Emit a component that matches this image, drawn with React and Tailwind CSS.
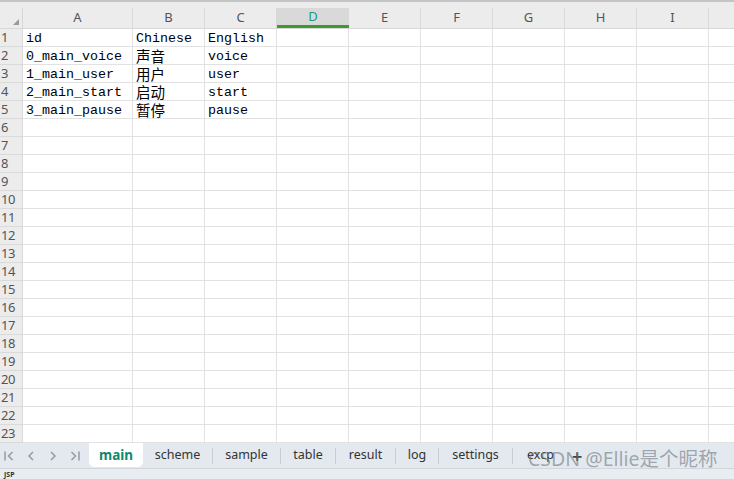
import React from 'react';

const cols = [
  { key: 'A', w: 'w-[110px]' },
  { key: 'B', w: 'w-[72px]' },
  { key: 'C', w: 'w-[72px]' },
  { key: 'D', w: 'w-[72px]' },
  { key: 'E', w: 'w-[72px]' },
  { key: 'F', w: 'w-[72px]' },
  { key: 'G', w: 'w-[72px]' },
  { key: 'H', w: 'w-[72px]' },
  { key: 'I', w: 'w-[72px]' },
];

const data = [
  ['id', 'Chinese', 'English'],
  ['0_main_voice', '声音', 'voice'],
  ['1_main_user', '用户', 'user'],
  ['2_main_start', '启动', 'start'],
  ['3_main_pause', '暂停', 'pause'],
];

const tabs = [
  { name: 'scheme', w: 'w-[70px]' },
  { name: 'sample', w: 'w-[68px]' },
  { name: 'table', w: 'w-[55px]' },
  { name: 'result', w: 'w-[60px]' },
  { name: 'log', w: 'w-[43px]' },
  { name: 'settings', w: 'w-[74px]' },
];

const isCjk = (s) => /[\u4e00-\u9fff]/.test(s);

const Chevron = ({ dir = 'left', bar = false }) => (
  <svg width="12" height="12" viewBox="0 0 12 12" fill="none" stroke="#8c97a3" strokeWidth="1.4">
    {dir === 'left' ? (
      <>
        {bar && <path d="M2 1.5v9" />}
        <path d={bar ? 'M9.5 2L5.5 6l4 4' : 'M8 2L4 6l4 4'} />
      </>
    ) : (
      <>
        <path d={bar ? 'M2.5 2l4 4-4 4' : 'M4 2l4 4-4 4'} />
        {bar && <path d="M10 1.5v9" />}
      </>
    )}
  </svg>
);

const App = () => {
  const rows = Array.from({ length: 23 }, (_, i) => i + 1);

  return (
    <div className="w-[734px] h-[479px] overflow-hidden bg-white flex flex-col font-['Noto_Sans',sans-serif]">
      {/* top strip */}
      <div className="h-[2px] bg-[#c4c4c4] shrink-0" />
      {/* column header */}
      <div className="h-[27px] bg-[#ececec] flex items-end shrink-0 border-b border-[#d8d8d8]">
        <div className="w-[23px] h-[20px] border-r border-[#d8d8d8] flex items-end justify-end pr-[3px] pb-[3px]">
          <div className="w-0 h-0 border-l-[6px] border-l-transparent border-b-[6px] border-b-[#9a9a9a]" />
        </div>
        {cols.map((c) =>
          c.key === 'D' ? (
            <div
              key={c.key}
              className={`${c.w} h-[20px] bg-[#d9d9d9] border-b-[3px] border-[#3f9a2d] flex items-center justify-center text-[13px] text-[#1b9a7c]`}
            >
              {c.key}
            </div>
          ) : (
            <div
              key={c.key}
              className={`${c.w} h-[20px] border-r border-[#d8d8d8] flex items-center justify-center text-[13px] text-[#555]`}
            >
              {c.key}
            </div>
          )
        )}
        <div className="flex-1 h-[20px]" />
      </div>

      {/* grid */}
      <div className="flex flex-col shrink-0">
        {rows.map((r) => (
          <div key={r} className="flex h-[18px]">
            <div className="w-[23px] bg-[#ececec] border-r border-b border-[#dadada] text-[13px] leading-[17px] text-[#555] pl-[1px] tracking-[-0.5px]">
              {r}
            </div>
            {cols.map((c, ci) => {
              const v = data[r - 1] ? data[r - 1][ci] : null;
              return (
                <div
                  key={c.key}
                  className={`${c.w} border-r border-b border-[#e2e2e2] pl-[3px] pt-[1px] flex items-center whitespace-nowrap text-black font-['Liberation_Mono','Noto_Sans_CJK_SC',monospace] text-[13.33px]`}
                >
                  {v && (isCjk(v) ? (
                    <span className="text-[14.5px] leading-[14px] font-['Noto_Sans_CJK_SC',sans-serif]">{v}</span>
                  ) : (
                    <span className="leading-[16px] pt-[1px]">{v}</span>
                  ))}
                </div>
              );
            })}
            <div className="flex-1 border-b border-[#e2e2e2]" />
          </div>
        ))}
      </div>

      {/* tab bar */}
      <div className="relative h-[26px] bg-[#e3e9ef] flex items-start shrink-0 border-b border-[#d0d6dc]">
        <div className="w-[89px] h-[25px] flex items-center pl-[3px] gap-[10px]">
          <Chevron dir="left" bar />
          <Chevron dir="left" />
          <Chevron dir="right" />
          <Chevron dir="right" bar />
        </div>
        <div className="w-[54px] h-[24px] bg-white rounded-b-[5px] flex items-center justify-center text-[13.5px] font-bold text-[#0c8a6e]">
          main
        </div>
        {tabs.map((t) => (
          <div key={t.name} className={`${t.w} h-[25px] flex items-center`}>
            <span className="flex-1 text-center text-[12.5px] text-[#333]">{t.name}</span>
            <span className="w-px h-[16px] bg-[#c6cdd5]" />
          </div>
        ))}
        <div className="w-[80px] h-[25px] flex items-center pl-[14px] text-[12.5px] text-[#333]">
          <span className="w-[45px]">excp</span>
          <span className="text-[18px] leading-none font-semibold text-[#444]">+</span>
        </div>
        <div className="absolute left-[528px] top-[3px] text-[19.5px] leading-[26px] text-[rgba(110,120,130,0.6)] whitespace-nowrap font-['Noto_Sans','Noto_Sans_CJK_SC',sans-serif]">
          CSDN @Ellie是个昵称
        </div>
      </div>

      {/* status bar */}
      <div className="flex-1 bg-[#e8edf2] flex items-center pl-[4px]">
        <span className="text-[7px] leading-none text-[#333] font-bold">JSP</span>
      </div>
    </div>
  );
};

export default App;
